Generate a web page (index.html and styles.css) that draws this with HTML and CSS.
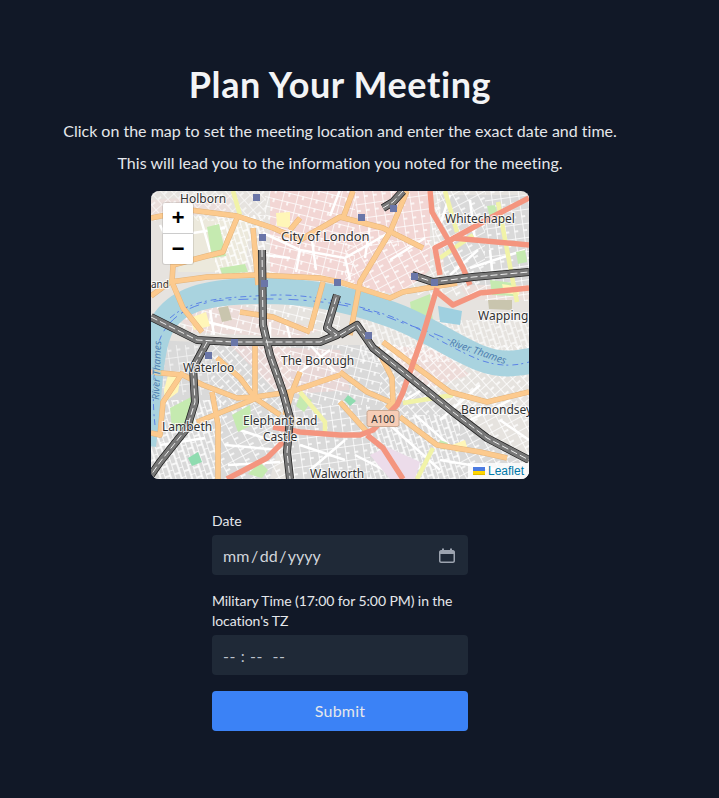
FILE: index.html
```html
<html>
<head>
    <title>Plan Your Meeting</title>
    <link rel="stylesheet" href="styles.css">
</head>
<body>
    <div class="page">
        <h1 class="title">Plan Your Meeting</h1>
        <p class="intro">Click on the map to set the meeting location and enter the exact date and time.</p>
        <p class="intro second">This will lead you to the information you noted for the meeting.</p>

        <div class="map">
            <svg class="map-tiles" viewBox="151 191 378 288" xmlns="http://www.w3.org/2000/svg">
                <defs>
                    <pattern id="streets-a" width="14" height="9" patternUnits="userSpaceOnUse" patternTransform="rotate(14)">
                        <path class="grid" d="M0 0H14M0 0V9M6 0V4"/>
                    </pattern>
                    <pattern id="streets-b" width="11" height="12" patternUnits="userSpaceOnUse" patternTransform="rotate(-28)">
                        <path class="grid" d="M0 0H11M0 0V12M0 6H5"/>
                    </pattern>
                    <pattern id="streets-c" width="13" height="8" patternUnits="userSpaceOnUse" patternTransform="rotate(48)">
                        <path class="grid" d="M0 0H13M0 0V8M7 4V8"/>
                    </pattern>
                    <pattern id="streets-d" width="9" height="14" patternUnits="userSpaceOnUse" patternTransform="rotate(-8)">
                        <path class="grid" d="M0 0H9M0 0V14M0 7H4"/>
                    </pattern>
                    <pattern id="streets-e" width="10" height="10" patternUnits="userSpaceOnUse" patternTransform="rotate(72)">
                        <path class="grid" d="M0 0H10M0 0V5M5 5V10M0 5H10"/>
                    </pattern>
                    <g id="orange-roads">
                        <path d="M151 218L190 210L237 216L273 228L300 240L340 217L383 228L423 248"/>
                        <path d="M300 218L290 230"/>
                        <path d="M353 191L343 218"/>
                        <path d="M407 191L390 232L360 282L350 335"/>
                        <path d="M237 218L227 242L223 252L203 257L173 265L172 282L183 308L202 332"/>
                        <path d="M151 296L170 282L207 277L257 275L320 278L340 282L390 298L403 292L457 283"/>
                        <path d="M253 228L258 285"/>
                        <path d="M240 312L273 317L310 332"/>
                        <path d="M323 282L310 330"/>
                        <path d="M151 372L183 375L203 385L237 398L255 397L290 392L340 375"/>
                        <path d="M255 345V397"/>
                        <path d="M217 358L240 378L255 398L280 415"/>
                        <path d="M183 372L163 402L160 435L151 433"/>
                        <path d="M212 392L218 425V479"/>
                        <path d="M197 422L257 398"/>
                        <path d="M340 372L367 392L390 402"/>
                        <path d="M340 402L367 432"/>
                        <path d="M377 348L392 378L393 402L387 408"/>
                        <path d="M400 417L437 445L480 452L507 458"/>
                        <path d="M383 342L423 372L450 392L487 402L529 392"/>
                        <path d="M285 415L292 392L300 372"/>
                    </g>
                    <g id="motor-roads">
                        <path d="M262 250L263 325L270 355L283 392L290 418L287 452L290 479"/>
                        <path d="M151 317L197 340L233 342H320L337 335L327 328L337 295"/>
                        <path d="M207 342L193 368L195 402L187 428L160 462L151 475"/>
                        <path d="M340 335L357 325L373 348L407 375L453 412L487 438L529 460"/>
                        <path d="M412 275L433 282L473 277L529 272"/>
                        <path d="M403 191L393 202L383 208"/>
                    </g>
                </defs>

                <!-- land use -->
                <rect class="land" x="151" y="191" width="378" height="288"/>
                <path class="pink" d="M270 191H430V270L400 295L330 282L270 272Z"/>
                <path class="pink" d="M430 250L529 240V300L470 300Z" opacity=".45"/>
                <path class="grey" d="M151 340L270 345L290 400L270 479H151Z"/>
                <path class="grey" d="M290 345L370 345L460 420L529 465V479H290Z"/>
                <path class="grey" d="M440 195H529V285H445Z"/>
                <path class="pink" d="M230 345L340 350L350 390L280 395Z" opacity=".6"/>
                <path class="pink" d="M385 345L440 350L470 375L420 390Z" opacity=".6"/>
                <path class="pink" d="M175 310L240 305L320 330L300 338L190 332Z" opacity=".5"/>
                <path class="pale" d="M180 215L250 222L245 272L178 272Z"/>
                <path class="pink" d="M151 200L230 195L230 212L151 218Z" opacity=".4"/>

                <!-- minor streets -->
                <rect fill="url(#streets-a)" x="265" y="191" width="90" height="100"/>
                <rect fill="url(#streets-d)" x="355" y="191" width="85" height="55"/>
                <rect fill="url(#streets-b)" x="345" y="240" width="90" height="55"/>
                <rect fill="url(#streets-b)" x="435" y="191" width="50" height="105"/>
                <rect fill="url(#streets-d)" x="485" y="191" width="44" height="110"/>
                <rect fill="url(#streets-c)" x="151" y="191" width="115" height="30" opacity=".8"/>
                <rect fill="url(#streets-e)" x="215" y="215" width="50" height="60"/>
                <rect fill="url(#streets-a)" x="170" y="305" width="170" height="30"/>
                <rect fill="url(#streets-d)" x="151" y="345" width="60" height="50" opacity=".7"/>
                <rect fill="url(#streets-c)" x="211" y="345" width="80" height="60"/>
                <rect fill="url(#streets-e)" x="151" y="400" width="70" height="79"/>
                <rect fill="url(#streets-b)" x="221" y="405" width="70" height="74"/>
                <rect fill="url(#streets-a)" x="290" y="345" width="90" height="60"/>
                <rect fill="url(#streets-d)" x="290" y="405" width="80" height="74"/>
                <rect fill="url(#streets-c)" x="380" y="345" width="149" height="70"/>
                <rect fill="url(#streets-e)" x="370" y="415" width="90" height="64"/>
                <rect fill="url(#streets-b)" x="460" y="415" width="69" height="64"/>
                <rect fill="url(#streets-e)" x="360" y="320" width="169" height="42" opacity=".8"/>

                <!-- wider white streets -->
                <path class="street" d="M263 233L300 250L345 258L390 232M300 250L296 272M345 258L350 280M390 260L425 238M265 255L290 258M340 190L330 216M370 225L365 258M312 240L316 270"/>
                <path class="street" d="M450 195L440 225M470 200L475 240M490 250L494 290M525 250L470 268M450 275L478 250"/>
                <path class="street" d="M160 225L178 262M200 216L212 258M180 235L225 228M215 300L226 300"/>
                <path class="street" d="M190 318L240 330M210 310L214 335M270 322L270 338M285 318L290 338"/>
                <path class="street" d="M330 350L300 372M310 345L335 372M395 345L378 360M430 385L405 400M440 420L480 385M470 420L510 400M500 420L529 440"/>
                <path class="street" d="M240 430L270 440M225 445L280 450M228 465L280 462M300 445L345 460M310 470L345 440M160 445L205 438"/>
                <path class="street" d="M390 425L440 470M415 415L455 450M355 455L400 478M440 460L500 470"/>

                <!-- parks and patches -->
                <path class="green" d="M207 227L219 224L226 256L212 258Z"/>
                <path class="green" d="M220 268L245 264L248 272L222 274Z"/>
                <path class="green" d="M410 302L430 294L433 322L412 318Z"/>
                <path class="green" d="M170 408L195 395L193 428L172 430Z"/>
                <path class="green" d="M232 415L250 405L252 425L238 432Z"/>
                <path class="green" d="M300 395L312 400L304 412L296 406Z"/>
                <path class="green" d="M490 280L515 283L515 296L492 295Z"/>
                <path class="green" d="M487 206L495 205L498 216L490 218Z"/>
                <path class="green" d="M516 252L525 250L527 262L518 264Z"/>
                <path class="green" d="M248 474L260 462L268 470L262 478Z"/>
                <path class="green" d="M440 440L448 443L445 450L438 447Z"/>
                <path class="mint" d="M188 458L198 452L202 462L192 466Z"/>
                <path class="mint" d="M348 395L356 401L350 406L344 400Z"/>
                <path class="buff" d="M168 375L181 375L178 392L165 402L164 390Z"/>
                <path class="buff" d="M276 213L290 212L290 228L277 226Z"/>
                <path class="buff" d="M190 318L206 312L210 326L194 330Z"/>
                <path class="buff" d="M502 284L520 287L519 295L504 293Z"/>
                <path class="buff" d="M452 445L465 440L468 450L456 452Z"/>
                <path class="tan" d="M218 308L228 306L232 320L222 322Z"/>
                <path class="tan" d="M488 300L512 300L512 310L489 309Z"/>
                <path class="lilac" d="M387 447L420 462L415 479H390L370 455Z"/>

                <!-- river -->
                <path class="river" d="M143 445C150 400 148 350 162 325C176 300 205 292 255 291C300 290 340 296 390 314C425 326 450 346 480 358C500 366 515 364 535 360"/>
                <path class="dock" d="M438 306L462 311L460 325L440 322Z"/>
                <path class="river-dash" d="M170 318C190 300 220 298 255 296C300 292 340 300 390 316C425 330 450 348 480 360C500 367 515 366 529 362"/>
                <path class="river-dash alt" d="M158 345C164 322 185 303 225 300C270 298 340 296 400 322C430 332 450 338 470 352"/>
                <path class="river-dash" d="M155 425C152 400 153 370 158 350"/>

                <!-- main roads -->
                <g class="road-yellow">
                    <path d="M233 191L240 215"/>
                    <path d="M445 191L457 232"/>
                    <path d="M498 202L513 282L517 302"/>
                    <path d="M440 258L473 235"/>
                    <path d="M300 392L325 422V433"/>
                    <path d="M403 403L453 395"/>
                    <path d="M433 448L417 479"/>
                </g>
                <use class="road-orange-case" href="#orange-roads"/>
                <use class="road-orange" href="#orange-roads"/>
                <g class="road-salmon">
                    <path d="M430 191L432 212L447 238L463 268L470 285"/>
                    <path d="M529 198L490 218L447 242L435 248L440 275"/>
                    <path d="M453 238L529 245"/>
                    <path d="M437 288L423 335L403 392L397 405L373 430L360 435H340L300 432L273 427"/>
                    <path d="M529 288L480 293L453 305L437 292"/>
                    <path d="M367 435L383 448L403 479"/>
                    <path d="M283 442L267 458L227 479"/>
                </g>
                <use class="motor-case" href="#motor-roads"/>
                <use class="motor" href="#motor-roads"/>
                <use class="motor-dash" href="#motor-roads"/>

                <!-- stations -->
                <g class="stations">
                    <rect x="253" y="194" width="7" height="7"/>
                    <rect x="259" y="234" width="7" height="7"/>
                    <rect x="261" y="280" width="7" height="7"/>
                    <rect x="334" y="279" width="7" height="7"/>
                    <rect x="390" y="205" width="7" height="7"/>
                    <rect x="358" y="214" width="7" height="7"/>
                    <rect x="411" y="273" width="7" height="7"/>
                    <rect x="431" y="279" width="7" height="7"/>
                    <rect x="231" y="339" width="7" height="7"/>
                    <rect x="205" y="352" width="7" height="7"/>
                    <rect x="365" y="332" width="7" height="7"/>
                </g>

                <!-- labels -->
                <g class="labels">
                    <text x="180" y="203">Holborn</text>
                    <text class="city" x="281" y="241">City of London</text>
                    <text x="445" y="223">Whitechapel</text>
                    <text x="478" y="320">Wapping</text>
                    <text x="281" y="365">The Borough</text>
                    <text x="183" y="372">Waterloo</text>
                    <text x="162" y="431">Lambeth</text>
                    <text x="243" y="425">Elephant and</text>
                    <text x="263" y="441">Castle</text>
                    <text x="310" y="478">Walworth</text>
                    <text x="461" y="414">Bermondsey</text>
                    <text class="small" x="151" y="288">and</text>
                    <text class="water" transform="translate(449 345) rotate(19)">River Thames</text>
                    <text class="water" transform="translate(159 400) rotate(-88)">River Thames</text>
                </g>

                <!-- A100 shield -->
                <rect class="shield" x="367" y="410.500" width="32" height="16" rx="2"/>
                <text class="shield-text" x="383" y="422.500">A100</text>
            </svg>

            <div class="zoom-control">
                <div class="zoom-button">+</div>
                <div class="zoom-button">&minus;</div>
            </div>

            <div class="attribution">
                <svg class="flag" viewBox="0 0 12 8" xmlns="http://www.w3.org/2000/svg">
                    <rect width="12" height="4" fill="#4C7BE1"/>
                    <rect y="4" width="12" height="3" fill="#FFD500"/>
                    <rect y="7" width="12" height="1" fill="#E0BC00"/>
                </svg>
                <span class="leaflet-link">Leaflet</span>
            </div>
        </div>

        <form class="meeting-form">
            <div class="field-label">Date</div>
            <div class="field">
                <span class="date-text">mm / dd / yyyy</span>
                <svg class="calendar" viewBox="0 0 16 16" xmlns="http://www.w3.org/2000/svg">
                    <path d="M3 1.500H5V3H11V1.500H13V3H14C15 3 16 4 16 5V14C16 15 15 16 14 16H2C1 16 0 15 0 14V5C0 4 1 3 2 3H3ZM1.500 7V14C1.500 14.300 1.700 14.500 2 14.500H14C14.300 14.500 14.500 14.300 14.500 14V7Z"/>
                </svg>
            </div>
            <div class="field-label time-label">Military Time (17:00 for 5:00 PM) in the location's TZ</div>
            <div class="field time-field">-- : --  --</div>
            <button class="submit" type="button">Submit</button>
        </form>
    </div>
</body>
</html>
```

FILE: styles.css
```css
body {
    margin: 0;
    background-color: #111827;
    color: #e5e7eb;
    font-family: Lato, sans-serif;
    font-variant-ligatures: none;
}
.page {
    display: flex;
    flex-direction: column;
    align-items: center;
    box-sizing: border-box;
    width: 680px;
    height: 798px;
    padding-top: 64px;
}
.title {
    margin: 0 0 15px 0;
    font-size: 36px;
    line-height: 40px;
    font-weight: 700;
    letter-spacing: .6px;
    color: #f3f4f6;
}
.intro {
    margin: 0;
    font-size: 16px;
    line-height: 24px;
    text-align: center;
}
.intro.second {
    margin-top: 8px;
    letter-spacing: .05px;
}
.map {
    position: relative;
    width: 378px;
    height: 288px;
    margin-top: 16px;
    border-radius: 8px;
    overflow: hidden;
}
.map-tiles {
    display: block;
    width: 378px;
    height: 288px;
}
.land { fill: #e6e3df; }
.pink { fill: #f2d6d4; }
.grey { fill: #d9d9d9; }
.pale { fill: #ece9dc; }
.green { fill: #c5eab0; }
.mint { fill: #8fdcb0; }
.buff { fill: #fff6b8; }
.tan { fill: #c9c5ae; }
.lilac { fill: #ecdcea; }
.dock { fill: #9fd0e0; }
.grid {
    fill: none;
    stroke: #fff;
    stroke-width: 1.500;
}
.street {
    fill: none;
    stroke: #fff;
    stroke-width: 2.500;
}
.river {
    fill: none;
    stroke: #a9d3df;
    stroke-width: 26;
}
.river-dash {
    fill: none;
    stroke: #5b82e6;
    stroke-width: 1;
    stroke-dasharray: 6 3 2 4;
}
.river-dash.alt {
    stroke-dasharray: 10 5 3 7;
}
.road-yellow path {
    fill: none;
    stroke: #f1f3a8;
    stroke-width: 4.500;
}
.road-orange-case {
    fill: none;
    stroke: #e3b47c;
    stroke-width: 5.500;
    stroke-linejoin: round;
}
.road-orange {
    fill: none;
    stroke: #fcca8e;
    stroke-width: 4.500;
    stroke-linejoin: round;
}
.road-salmon path {
    fill: none;
    stroke: #f4957f;
    stroke-width: 5.500;
    stroke-linejoin: round;
}
.motor-case {
    fill: none;
    stroke: #222;
    stroke-width: 8;
    stroke-linejoin: round;
}
.motor {
    fill: none;
    stroke: #777;
    stroke-width: 6.500;
    stroke-linejoin: round;
}
.motor-dash {
    fill: none;
    stroke: #eee;
    stroke-width: 1;
    stroke-dasharray: 7 3;
}
.stations rect {
    fill: #6a76a8;
}
.labels text {
    font-family: "Noto Sans", sans-serif;
    font-size: 12px;
    fill: #333;
    stroke: #fff;
    stroke-width: 2px;
    stroke-opacity: .8;
    paint-order: stroke;
}
.labels .city {
    font-size: 13px;
}
.labels .small {
    font-size: 10px;
}
.labels .water {
    font-size: 10px;
    font-style: italic;
    fill: #4f7fb0;
    stroke: #a9d3df;
}
.shield {
    fill: #f6cdb6;
    stroke: #c9a68f;
    stroke-width: 1;
}
.shield-text {
    font-family: "Noto Sans", sans-serif;
    font-size: 10px;
    text-anchor: middle;
    fill: #333;
}
.zoom-control {
    position: absolute;
    top: 12px;
    left: 12px;
    width: 30px;
    border-radius: 2px;
    background-color: #fff;
    box-shadow: 0 0 0 1px rgba(0, 0, 0, .1);
}
.zoom-button {
    height: 30px;
    font-family: "Liberation Mono", monospace;
    font-size: 22px;
    font-weight: 700;
    line-height: 33px;
    text-align: center;
    color: #000;
    border-bottom: 1px solid #ccc;
}
.zoom-button:last-child {
    border-bottom: none;
}
.attribution {
    position: absolute;
    right: 0;
    bottom: 0;
    display: flex;
    align-items: center;
    gap: 3px;
    padding: 0 5px;
    height: 16px;
    background-color: rgba(255, 255, 255, .8);
    font-family: "Liberation Sans", sans-serif;
    font-size: 12px;
    line-height: 16px;
}
.flag {
    width: 12px;
    height: 8px;
}
.leaflet-link {
    color: #0078a8;
}
.meeting-form {
    display: flex;
    flex-direction: column;
    width: 256px;
    margin-top: 32px;
}
.field-label {
    font-size: 14px;
    line-height: 20px;
    margin-bottom: 4px;
    color: #e5e7eb;
}
.time-label {
    margin-top: 16px;
    letter-spacing: -.08px;
}
.field {
    display: flex;
    align-items: center;
    justify-content: space-between;
    box-sizing: border-box;
    height: 40px;
    padding: 0 13px 0 11px;
    border-radius: 4px;
    background-color: #1f2937;
    color: #d1d5db;
    font-size: 16px;
}
.date-text {
    word-spacing: -2.500px;
}
.time-field {
    white-space: pre;
    letter-spacing: .6px;
    color: #bcc2cc;
}
.calendar {
    width: 16px;
    height: 16px;
    fill: #9ca3af;
}
.submit {
    height: 40px;
    margin-top: 16px;
    padding-bottom: 2px;
    border: none;
    border-radius: 4px;
    background-color: #3b82f6;
    color: #e5e7eb;
    font-family: Lato, sans-serif;
    font-size: 16px;
    letter-spacing: .2px;
}
```
